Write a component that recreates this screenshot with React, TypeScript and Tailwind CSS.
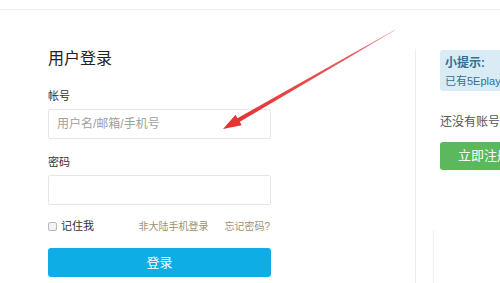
import React from 'react';

const font = { fontFamily: '"Liberation Sans", "Noto Sans CJK SC", sans-serif' };

export default function App() {
    return (
        <div className="relative w-[500px] h-[283px] overflow-hidden bg-white" style={font}>
            <div className="h-[10px] border-b border-[#ececec]"></div>

            <div className="flex pl-[48px] pt-[37px]">
                {/* login form */}
                <div className="w-[223px] shrink-0 flex flex-col">
                    <h2 className="text-[16px] leading-[24px] text-[#222]">用户登录</h2>

                    <label className="mt-[16px] text-[11px] leading-[18px] text-[#333]">帐号</label>
                    <input
                        placeholder="用户名/邮箱/手机号"
                        className="mt-[4px] h-[30px] w-full rounded-[2px] border border-[#e6e6e6] px-[8px] text-[12px] text-[#333] placeholder:text-[#a0a0a0] outline-none"
                    />

                    <label className="mt-[14px] text-[11px] leading-[18px] text-[#333]">密码</label>
                    <input
                        type="password"
                        className="mt-[4px] h-[30px] w-full rounded-[2px] border border-[#e6e6e6] px-[8px] text-[12px] outline-none"
                    />

                    <div className="mt-[12px] h-[18px] flex items-center justify-between">
                        <label className="flex items-center gap-[4px] text-[#333] text-[11px]">
                            <span className="w-[9px] h-[9px] rounded-[2px] border border-[#b8b8b8] bg-[#f3f3f3]"></span>
                            记住我
                        </label>
                        <div className="flex items-center gap-[16px] text-[#a3906f] text-[10px] pr-[1px]">
                            <span>非大陆手机登录</span>
                            <span>忘记密码?</span>
                        </div>
                    </div>

                    <button className="mt-[13px] h-[29px] w-full rounded-[3px] bg-[#0fade6] text-white text-[13px]">登录</button>
                </div>

                {/* side panel */}
                <div className="ml-[144px] mt-[2px] h-[300px] border-l border-[#ededed] pl-[24px] shrink-0 w-[200px]">
                    <div className="mt-[1px] h-[41px] rounded-[3px] bg-[#d9ecf6] px-[5px] pt-[4px] text-[#31708f]">
                        <div className="text-[12px] leading-[18px] font-bold">小提示:</div>
                        <div className="text-[11px] leading-[16px] mt-[1px] whitespace-nowrap">已有5Eplay易玩帐号可直接登录</div>
                    </div>
                    <div className="mt-[22px] text-[12px] leading-[18px] text-[#555] whitespace-nowrap">还没有账号?</div>
                    <button className="mt-[11px] h-[28px] w-[120px] rounded-[3px] bg-[#5cb85c] text-white text-[13px] text-left pl-[18px]">立即注册</button>
                </div>
            </div>

            {/* faint marks near bottom of divider */}
            <div className="absolute left-[433px] top-[230px] w-px h-[60px] bg-[#f0f0f0]"></div>

            {/* annotation arrow */}
            <svg className="absolute left-0 top-0" width="500" height="283" viewBox="0 0 500 283">
                <defs>
                    <linearGradient id="arr" x1="395" y1="30" x2="225" y2="128" gradientUnits="userSpaceOnUse">
                        <stop offset="0" stopColor="#f4b6b6" />
                        <stop offset="0.25" stopColor="#ec5a5a" />
                        <stop offset="1" stopColor="#e52f2f" />
                    </linearGradient>
                </defs>
                <polygon
                    points="395.2,30.3 394.8,29.7 237.4,118.3 235.6,114.8 223,129 241.6,125.2 239.8,121.7"
                    fill="url(#arr)"
                />
            </svg>
        </div>
    );
}
